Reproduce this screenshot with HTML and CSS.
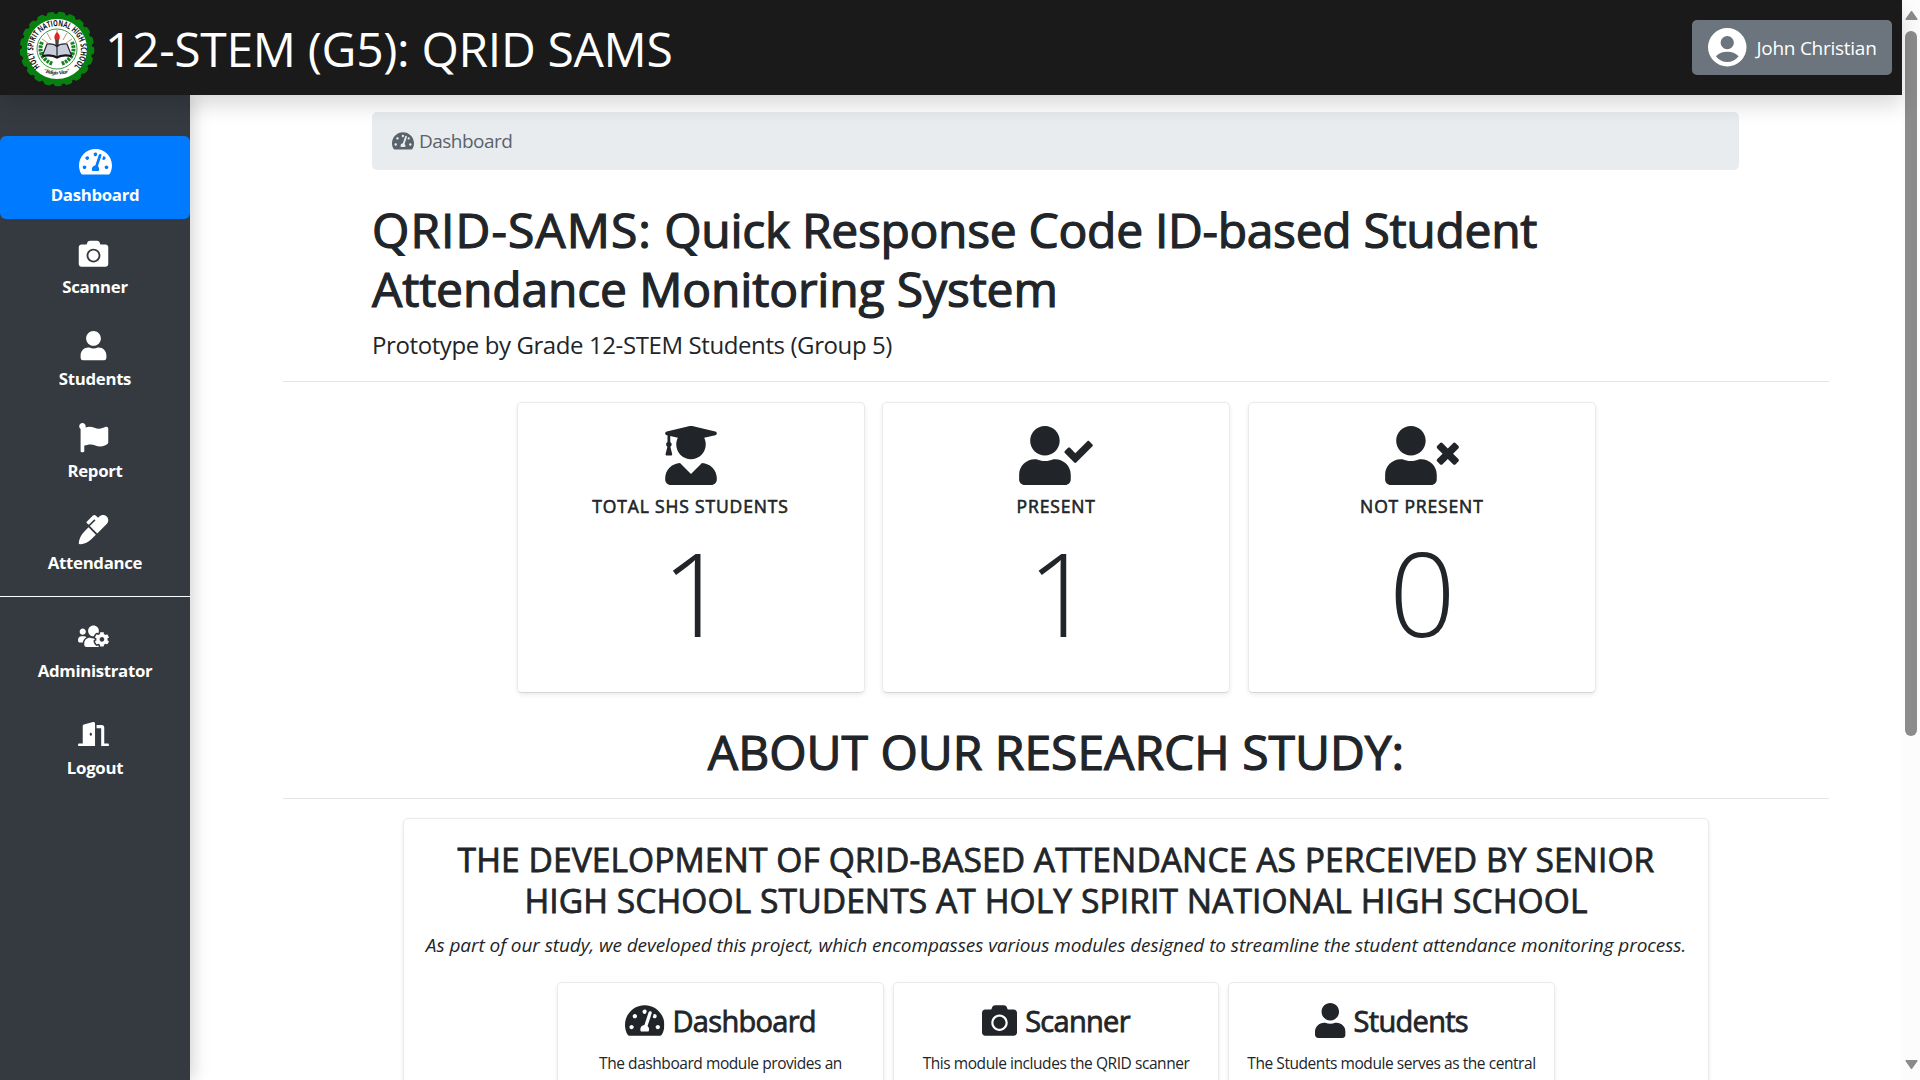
FILE: index.html
```
<!DOCTYPE html>
<html lang="en">
<head>
<meta charset="utf-8">
<title>12-STEM (G5): QRID SAMS</title>
<link rel="stylesheet" href="styles.css">
</head>
<body>
<svg class="sprite" aria-hidden="true">
  <symbol id="gauge" viewBox="0 0 576 512"><path d="M288 32C128.94 32 0 160.94 0 320c0 52.8 14.25 102.26 39.06 144.8 5.61 9.62 16.3 15.2 27.44 15.2h443c11.14 0 21.83-5.58 27.44-15.2C561.75 422.26 576 372.8 576 320c0-159.06-128.94-288-288-288zm0 64c14.71 0 26.58 10.13 30.32 23.65-1.11 2.26-2.64 4.23-3.45 6.67l-9.22 27.67c-5.13 3.49-10.97 6.01-17.64 6.01-17.67 0-32-14.33-32-32S270.33 96 288 96zM96 384c-17.67 0-32-14.33-32-32s14.33-32 32-32 32 14.33 32 32-14.33 32-32 32zm48-160c-17.67 0-32-14.33-32-32s14.33-32 32-32 32 14.33 32 32-14.33 32-32 32zm246.77-72.41l-61.33 184C343.13 347.33 352 364.54 352 384c0 11.72-3.38 22.55-8.88 32H232.88c-5.5-9.45-8.88-20.28-8.88-32 0-33.94 26.5-61.43 59.9-63.59l61.34-184.01c4.17-12.56 17.73-19.45 30.36-15.17 12.57 4.19 19.35 17.79 15.17 30.36zm14.66 57.2l15.52-46.55c3.47-1.29 7.13-2.23 11.05-2.23 17.67 0 32 14.33 32 32s-14.33 32-32 32c-11.38-.01-20.89-6.28-26.57-15.22zM480 384c-17.67 0-32-14.33-32-32s14.33-32 32-32 32 14.33 32 32-14.33 32-32 32z"/></symbol>
  <symbol id="camera" viewBox="0 0 512 512"><path d="M512 144v288c0 26.5-21.5 48-48 48H48c-26.5 0-48-21.5-48-48V144c0-26.5 21.5-48 48-48h88l12.3-32.9c7-18.7 24.9-31.1 44.9-31.1h125.5c20 0 37.9 12.4 44.9 31.1L376 96h88c26.5 0 48 21.5 48 48zM376 288c0-66.2-53.8-120-120-120s-120 53.8-120 120 53.8 120 120 120 120-53.8 120-120zm-32 0c0 48.5-39.5 88-88 88s-88-39.5-88-88 39.5-88 88-88 88 39.5 88 88z"/></symbol>
  <symbol id="user" viewBox="0 0 448 512"><path d="M224 256c70.7 0 128-57.3 128-128S294.7 0 224 0 96 57.3 96 128s57.3 128 128 128zm89.6 32h-16.7c-22.2 10.2-46.9 16-72.9 16s-50.6-5.8-72.9-16h-16.7C60.2 288 0 348.2 0 422.4V464c0 26.5 21.5 48 48 48h352c26.5 0 48-21.5 48-48v-41.6c0-74.2-60.2-134.4-134.4-134.4z"/></symbol>
  <symbol id="flag" viewBox="0 0 512 512"><path d="M349.565 98.783C295.978 98.783 251.721 64 184.348 64c-24.955 0-47.309 4.384-68.045 12.013a55.947 55.947 0 0 0 3.586-23.562C118.117 24.015 94.806 1.206 66.338.048 34.345-1.254 8 24.296 8 56c0 19.026 9.497 35.825 24 45.945V488c0 13.255 10.745 24 24 24h16c13.255 0 24-10.745 24-24v-94.4c28.311-12.064 63.582-22.122 114.435-22.122 53.588 0 97.844 34.783 165.217 34.783 48.169 0 86.667-16.294 122.505-40.858C506.84 359.452 512 349.571 512 339.045v-243.1c0-23.393-24.269-38.87-45.485-29.016-34.338 15.948-76.454 31.854-116.95 31.854z"/></symbol>
  <symbol id="marker" viewBox="0 0 512 512"><path d="M93.95 290.03A327.038 327.038 0 0 0 .17 485.11l-.03.23c-1.7 15.28 11.21 28.2 26.49 26.51a327.02 327.02 0 0 0 195.34-93.8l75.4-75.4-128.02-128.02-75.4 75.4zM485.49 26.51c-35.35-35.35-92.67-35.35-128.02 0l-21.76 21.76-36.56-36.55c-15.62-15.62-40.95-15.62-56.56 0L138.47 115.84c-6.25 6.25-6.25 16.38 0 22.63l22.62 22.62c6.25 6.25 16.38 6.25 22.63 0l87.15-87.15 19.59 19.59L191.98 192 320 320.02l165.49-165.49c35.35-35.35 35.35-92.66 0-128.02z"/></symbol>
  <symbol id="users-cog" viewBox="0 0 640 512"><path d="M610.5 341.3c2.6-14.1 2.6-28.5 0-42.6l25.8-14.9c3-1.7 4.3-5.2 3.3-8.5-6.7-21.6-18.2-41.2-33.2-57.4-2.3-2.5-6-3.1-9-1.4l-25.8 14.9c-10.9-9.3-23.4-16.5-36.9-21.3v-29.8c0-3.4-2.4-6.4-5.7-7.1-22.3-5-45-4.8-66.2 0-3.3.7-5.7 3.7-5.7 7.1v29.8c-13.5 4.8-26 12-36.9 21.3l-25.8-14.9c-2.9-1.7-6.7-1.1-9 1.4-15 16.2-26.5 35.8-33.2 57.4-1 3.3.4 6.8 3.3 8.5l25.8 14.9c-2.6 14.1-2.6 28.5 0 42.6l-25.8 14.9c-3 1.7-4.3 5.2-3.3 8.5 6.7 21.6 18.2 41.1 33.2 57.4 2.3 2.5 6 3.1 9 1.4l25.8-14.9c10.9 9.3 23.4 16.5 36.9 21.3v29.8c0 3.4 2.4 6.4 5.7 7.1 22.3 5 45 4.8 66.2 0 3.3-.7 5.7-3.7 5.7-7.1v-29.8c13.5-4.8 26-12 36.9-21.3l25.8 14.9c2.9 1.7 6.7 1.1 9-1.4 15-16.2 26.5-35.8 33.2-57.4 1-3.3-.4-6.8-3.3-8.5l-25.8-14.9zM496 368.5c-26.8 0-48.5-21.8-48.5-48.5s21.8-48.5 48.5-48.5 48.5 21.8 48.5 48.5-21.7 48.5-48.5 48.5zM96 224c35.3 0 64-28.7 64-64s-28.7-64-64-64-64 28.7-64 64 28.7 64 64 64zm224 32c1.9 0 3.7-.5 5.6-.6 8.3-21.7 20.5-42.1 36.3-59.2 7.4-8 17.9-12.6 28.9-12.6 6.9 0 13.7 1.8 19.6 5.3l7.9 4.6c.8-.5 1.6-.9 2.4-1.4 7-14.6 11.2-30.8 11.2-48 0-61.9-50.1-112-112-112S208 82.1 208 144c0 61.9 50.1 112 112 112zm105.2 194.5c-2.3-1.2-4.6-2.6-6.8-3.9-8.2 4.8-15.3 9.8-27.5 9.8-10.9 0-21.4-4.6-28.9-12.6-18.3-19.8-32.3-43.9-40.2-69.6-10.7-34.5 24.9-49.7 25.8-50.3-.1-2.6-.1-5.2 0-7.8l-7.9-4.6c-3.8-2.2-7-5-9.8-8.1-3.3.2-6.5.6-9.8.6-24.6 0-47.6-6-68.5-16h-8.3C179.6 288 128 339.6 128 403.2V432c0 26.5 21.5 48 48 48h255.4c-3.7-6-6.2-12.8-6.2-20.3v-9.2zM173.1 274.6C161.5 263.1 145.6 256 128 256H64c-35.3 0-64 28.7-64 64v32c0 17.7 14.3 32 32 32h65.9c6.3-47.4 34.9-87.3 75.2-109.4z"/></symbol>
  <symbol id="door" viewBox="0 0 640 512"><path d="M624 448h-80V113.45C544 86.19 522.47 64 496 64H384v64h96v384h144c8.84 0 16-7.16 16-16v-32c0-8.84-7.16-16-16-16zM312.24 1.01l-192 49.74C105.99 54.44 96 67.7 96 82.92V448H16c-8.84 0-16 7.16-16 16v32c0 8.84 7.16 16 16 16h336V33.18c0-21.58-19.56-37.41-39.76-32.17zM264 288c-13.25 0-24-14.33-24-32s10.75-32 24-32 24 14.33 24 32-10.75 32-24 32z"/></symbol>
  <symbol id="graduate" viewBox="0 0 448 512"><path d="M319.4 320.6L224 416l-95.4-95.4C57.1 323.7 0 382.2 0 454.4v9.6c0 26.5 21.5 48 48 48h352c26.5 0 48-21.5 48-48v-9.6c0-72.2-57.1-130.7-128.6-133.8zM13.6 79.8l6.4 1.5v58.4c-7 4.2-12 11.5-12 20.3 0 8.4 4.6 15.4 11.1 19.7L3.5 242c-1.7 6.9 2.1 14 7.6 14h41.8c5.5 0 9.3-7.1 7.6-14l-15.6-62.3C51.4 175.4 56 168.4 56 160c0-8.8-5-16.1-12-20.3V87.1l66 15.9c-8.6 17.2-14 36.4-14 57 0 70.7 57.3 128 128 128s128-57.3 128-128c0-20.6-5.3-39.8-14-57l96.3-23.2c18.2-4.4 18.2-27.1 0-31.5l-190.4-46c-13-3.1-26.7-3.1-39.7 0L13.6 48.2c-18.1 4.4-18.1 27.2 0 31.6z"/></symbol>
  <symbol id="user-check" viewBox="0 0 640 512"><path d="M224 256c70.7 0 128-57.3 128-128S294.7 0 224 0 96 57.3 96 128s57.3 128 128 128zm89.6 32h-16.7c-22.2 10.2-46.9 16-72.9 16s-50.6-5.8-72.9-16h-16.7C60.2 288 0 348.2 0 422.4V464c0 26.5 21.5 48 48 48h352c26.5 0 48-21.5 48-48v-41.6c0-74.2-60.2-134.4-134.4-134.4zm323-128.4l-27.8-28.1c-4.6-4.7-12.1-4.7-16.8-.1l-104.8 104-45.5-45.8c-4.6-4.7-12.1-4.7-16.8-.1l-28.1 27.9c-4.7 4.6-4.7 12.1-.1 16.8l81.7 82.3c4.6 4.7 12.1 4.7 16.8.1l141.3-140.2c4.6-4.7 4.7-12.2.1-16.8z"/></symbol>
  <symbol id="user-times" viewBox="0 0 640 512"><path d="M589.6 240l45.6-45.6c6.3-6.3 6.3-16.5 0-22.8l-22.8-22.8c-6.3-6.3-16.5-6.3-22.8 0L544 194.4l-45.6-45.6c-6.3-6.3-16.5-6.3-22.8 0l-22.8 22.8c-6.3 6.3-6.3 16.5 0 22.8l45.6 45.6-45.6 45.6c-6.3 6.3-6.3 16.5 0 22.8l22.8 22.8c6.3 6.3 16.5 6.3 22.8 0l45.6-45.6 45.6 45.6c6.3 6.3 16.5 6.3 22.8 0l22.8-22.8c6.3-6.3 6.3-16.5 0-22.8L589.6 240zM224 256c70.7 0 128-57.3 128-128S294.7 0 224 0 96 57.3 96 128s57.3 128 128 128zm89.6 32h-16.7c-22.2 10.2-46.9 16-72.9 16s-50.6-5.8-72.9-16h-16.7C60.2 288 0 348.2 0 422.4V464c0 26.5 21.5 48 48 48h352c26.5 0 48-21.5 48-48v-41.6c0-74.2-60.2-134.4-134.4-134.4z"/></symbol>
</svg>
<div class="window">
  <div class="page">
    <header class="topbar">
      <div class="brand">
        <svg class="seal" viewBox="0 0 76 74">
          <circle cx="38" cy="37" r="35.200" fill="#078010"/>
          <circle cx="38" cy="37" r="34.800" fill="none" stroke="#078010" stroke-width="5" stroke-dasharray="3 7.410" stroke-linecap="round"/>
          <circle cx="38" cy="37" r="30" fill="#fff"/>
          <circle cx="38" cy="37" r="20" fill="#fff" stroke="#238a2b" stroke-width=".9"/>
          <path d="M23 30c-4 9 0 18 11 22M53 30c4 9 0 18-11 22" fill="none" stroke="#188324" stroke-width="4" stroke-dasharray="2.6 .9"/>
          <path d="M38 27V18M32 28l-4-7M44 28l4-7M29 31l-6-4M47 31l6-4" stroke="#b98c6a" stroke-width=".9"/>
          <path d="M36.2 28h3.6l-.8 13h-2z" fill="#444"/>
          <path d="M38 20c3 3 3.400 5 2 8h-4c-1.400-3-.6-5 2-8z" fill="#e3221c"/>
          <path d="M28 32c4-.5 8 .5 10 2.500 2-2 6-3 10-2.500l4.500 11.500c-6-1-11-.5-14.500 1.500-3.500-2-8.500-2.500-14.500-1.500z" fill="#c9ccda" stroke="#22222c" stroke-width="1.200"/>
          <path d="M23.500 44c6-1 11-.5 14.500 1.500 3.500-2 8.500-2.500 14.500-1.500" fill="none" stroke="#15151c" stroke-width="2.200"/>
          <path d="M38 34v11" stroke="#22222c" stroke-width="1.200"/>
          <path id="arc" d="M21 54.500A23.800 23.800 0 1 1 55 54.500" fill="none"/>
          <path id="base" d="M24 60Q38 65 52 60" fill="none"/>
          <text class="seal-name"><textPath href="#arc" textLength="111" lengthAdjust="spacingAndGlyphs">HOLY SPIRIT NATIONAL HIGH SCHOOL</textPath></text>
          <text class="seal-motto"><textPath href="#base" textLength="28">"Religio Vitae"</textPath></text>
        </svg>
        <span class="brand-name">12-STEM (G5): QRID SAMS</span>
      </div>
      <button class="account">
        <svg class="avatar" viewBox="2 2 20 20"><path fill-rule="evenodd" d="M12 2a10 10 0 1 0 0 20 10 10 0 0 0 0-20zM12 6.150a3.450 3.450 0 1 1 0 6.900 3.450 3.450 0 0 1 0-6.900zM6.100 16.700C7.600 15 9.700 14.300 12 14.300s4.400.7 5.900 2.400C16.500 18.600 14.300 19.700 12 19.700s-4.500-1.100-5.900-3z"/></svg>
        <span>John Christian</span>
      </button>
    </header>
    <div class="body">
      <nav class="sidebar">
        <a class="nav-item active"><svg class="icon"><use href="#gauge"/></svg><span>Dashboard</span></a>
        <a class="nav-item"><svg class="icon"><use href="#camera"/></svg><span>Scanner</span></a>
        <a class="nav-item"><svg class="icon"><use href="#user"/></svg><span>Students</span></a>
        <a class="nav-item"><svg class="icon"><use href="#flag"/></svg><span>Report</span></a>
        <a class="nav-item"><svg class="icon"><use href="#marker"/></svg><span>Attendance</span></a>
        <hr class="nav-rule">
        <a class="nav-item small"><svg class="icon"><use href="#users-cog"/></svg><span>Administrator</span></a>
        <a class="nav-item small"><svg class="icon"><use href="#door"/></svg><span>Logout</span></a>
      </nav>
      <main class="main">
        <section class="intro">
          <div class="breadcrumb"><svg class="crumb-icon"><use href="#gauge"/></svg><span>Dashboard</span></div>
          <h1 class="title"><span class="acronym">QRID-SAMS:</span> <span class="expansion">Quick Response Code ID-based Student</span><br>Attendance Monitoring System</h1>
          <p class="lead">Prototype by Grade 12-STEM Students (Group 5)</p>
        </section>
        <hr class="rule">
        <section class="stats">
          <div class="card stat"><svg class="stat-icon"><use href="#graduate"/></svg><h6>TOTAL SHS STUDENTS</h6><div class="count one">1</div></div>
          <div class="card stat"><svg class="stat-icon"><use href="#user-check"/></svg><h6>PRESENT</h6><div class="count one">1</div></div>
          <div class="card stat"><svg class="stat-icon"><use href="#user-times"/></svg><h6>NOT PRESENT</h6><div class="count">0</div></div>
        </section>
        <h1 class="about">ABOUT OUR RESEARCH STUDY:</h1>
        <hr class="rule">
        <section class="card study">
          <h3 class="study-title">THE DEVELOPMENT OF QRID-BASED ATTENDANCE AS PERCEIVED BY SENIOR<br>HIGH SCHOOL STUDENTS AT HOLY SPIRIT NATIONAL HIGH SCHOOL</h3>
          <p class="study-text">As part of our study, we developed this project, which encompasses various modules designed to streamline the student attendance monitoring process.</p>
          <div class="modules">
            <div class="card module"><h4><svg class="mod-icon wide"><use href="#gauge"/></svg><span>Dashboard</span></h4><p>The dashboard module provides an</p></div>
            <div class="card module"><h4><svg class="mod-icon"><use href="#camera"/></svg><span>Scanner</span></h4><p>This module includes the QRID scanner</p></div>
            <div class="card module"><h4><svg class="mod-icon slim"><use href="#user"/></svg><span>Students</span></h4><p>The Students module serves as the central</p></div>
          </div>
        </section>
      </main>
    </div>
  </div>
  <div class="scrollbar">
    <svg class="arrow" viewBox="0 0 13 10"><path d="M6.500 1.200L11.800 8.800H1.200z"/></svg>
    <div class="thumb"></div>
    <svg class="arrow down" viewBox="0 0 13 10"><path d="M6.500 8.800L11.800 1.200H1.200z"/></svg>
  </div>
</div>
</body>
</html>
```
FILE: styles.css
```
* { box-sizing: border-box; margin: 0; padding: 0; }

body {
  height: 1080px;
  overflow: hidden;
  background: #fff;
  color: #212529;
  font-family: "Open Sans", "Noto Sans", sans-serif;
}

.sprite { display: none; }
svg { fill: currentColor; }
span, h1, h3, h4, h6, p { white-space: nowrap; }

.window { display: grid; grid-template-columns: 1fr 18px; height: 1080px; }
.page { display: flex; flex-direction: column; min-width: 0; height: 1080px; }

/* top bar */
.topbar {
  position: relative;
  z-index: 2;
  flex: none;
  height: 95px;
  padding: 0 10px 0 19px;
  display: flex;
  align-items: center;
  justify-content: space-between;
  background: #1a1a1a;
  box-shadow: 0 10px 20px rgba(0, 0, 0, .15);
  color: #fff;
}
.brand { display: flex; align-items: center; gap: 10px; }
.seal { width: 76px; height: 74px; margin-top: 2px; overflow: visible; }
.seal-name { font: 700 8.500px "Open Sans", sans-serif; fill: #111; }
.seal-motto { font: italic 700 5.500px "Liberation Serif", serif; fill: #222; }
.brand-name { font-size: 48px; line-height: 58px; letter-spacing: -.33px; padding-top: 2px; }
.account {
  display: flex;
  align-items: center;
  gap: 10px;
  width: 200px;
  height: 55px;
  padding-left: 16px;
  border: 0;
  border-radius: 5px;
  background: #6c757d;
  color: #fff;
  font: 400 19px/28px "Open Sans", sans-serif;
  letter-spacing: -.27px;
}
.avatar { width: 38.500px; height: 38.500px; }

.body { flex: 1; min-height: 0; display: flex; overflow: hidden; }

/* sidebar */
.sidebar {
  position: relative;
  z-index: 1;
  flex: none;
  width: 190px;
  padding-top: 41px;
  background: #343a40;
  box-shadow: 3px 0 16px rgba(0, 0, 0, .18);
  color: #fff;
}
.nav-item {
  display: flex;
  flex-direction: column;
  align-items: center;
  gap: 6px;
  height: 83px;
  margin-bottom: 9px;
  padding-top: 11.200px;
  border-radius: 6px;
}
.nav-item.active { background: #007bff; }
.nav-item span { font-weight: 700; font-size: 16.800px; line-height: 24px; letter-spacing: -.3px; }
.nav-item .icon { width: 33px; height: 29.500px; margin-right: 3px; }
.nav-item.active .icon { margin-right: 0; }
.nav-rule { height: 1px; border: 0; background: #fff; margin-bottom: 16px; }
.nav-item.small { gap: 10.200px; height: 88.500px; }
.nav-item.small .icon { width: 31px; height: 24.600px; }

/* main column */
.main { flex: 1; padding: 17px 73px 0 93px; min-width: 0; }
.intro { padding: 0 90px 0 89px; }
.breadcrumb {
  display: flex;
  align-items: center;
  gap: 5px;
  height: 58px;
  padding-left: 20px;
  border-radius: 5px;
  background: #e9ecef;
  color: #5a636b;
  font-size: 19px;
  letter-spacing: -.52px;
}
.crumb-icon { width: 22px; height: 19.700px; }
.title, .about { font-weight: 400; font-size: 48px; line-height: 59px; -webkit-text-stroke: 1.200px #212529; }
.title { margin: 29.500px 0 8px; letter-spacing: -.15px; }
.acronym { letter-spacing: 1.050px; }
.expansion { letter-spacing: -.31px; }
.lead { font-size: 24px; line-height: 37px; letter-spacing: -.4px; }
.rule { height: 1px; border: 0; background: #e3e4e5; }
.intro + .rule { margin: 18.500px 0 19.500px; }

.card {
  background: #fff;
  border: 1px solid #e9eaeb;
  border-radius: 5px;
  box-shadow: 0 2px 4px rgba(0, 0, 0, .08);
}
.stats { display: grid; grid-template-columns: repeat(3, 348px); gap: 17.700px; padding-left: 233.500px; }
.stat {
  display: flex;
  flex-direction: column;
  align-items: center;
  height: 291px;
  padding-top: 23.500px;
  border-bottom-color: #d4d5d6;
}
.stat-icon { width: 74px; height: 59px; }
.stat h6 {
  margin-top: 9px;
  font-weight: 400;
  font-size: 17.500px;
  line-height: 24px;
  letter-spacing: .85px;
  -webkit-text-stroke: .6px #212529;
}
.count { font-weight: 300; font-size: 117px; line-height: 110px; margin-top: 18.500px; padding-left: 1px; }
.count.one { padding-left: 9px; }

.about { margin-top: 29px; margin-bottom: 17px; text-align: center; }
.study {
  margin: 19px 120px 0 120px;
  height: 500px;
  padding-top: 20px;
  text-align: center;
}
.study-title {
  font-weight: 400;
  font-size: 33.600px;
  line-height: 41px;
  letter-spacing: .07px;
  -webkit-text-stroke: .8px #212529;
}
.study-text { margin-top: 10px; font-size: 19px; font-style: italic; line-height: 29.500px; letter-spacing: -.07px; }
.modules { display: grid; grid-template-columns: repeat(3, 326.500px); justify-content: center; gap: 9px; margin-top: 22px; }
.module { height: 300px; padding-top: 19.500px; }
.module h4 {
  display: flex;
  justify-content: center;
  align-items: center;
  gap: 8px;
  height: 35px;
  font-weight: 400;
  font-size: 29px;
  line-height: 35px;
  letter-spacing: -.7px;
  -webkit-text-stroke: .8px #212529;
}
.mod-icon { width: 35px; height: 35px; }
.mod-icon.wide { width: 39.400px; }
.mod-icon.slim { width: 30.600px; }
.module p { margin-top: 13.500px; font-size: 15.500px; line-height: 24px; letter-spacing: -.44px; }

/* page scrollbar */
.scrollbar { display: flex; flex-direction: column; align-items: center; background: #fcfcfc; color: #8b8b8b; padding: 10px 0; }
.arrow { width: 13px; height: 11px; stroke: #8b8b8b; stroke-width: 1.500; stroke-linejoin: round; }
.thumb { width: 12px; height: 705px; margin-top: 10px; border-radius: 6px; background: #8b8b8b; }
.arrow.down { margin-top: auto; }
```
